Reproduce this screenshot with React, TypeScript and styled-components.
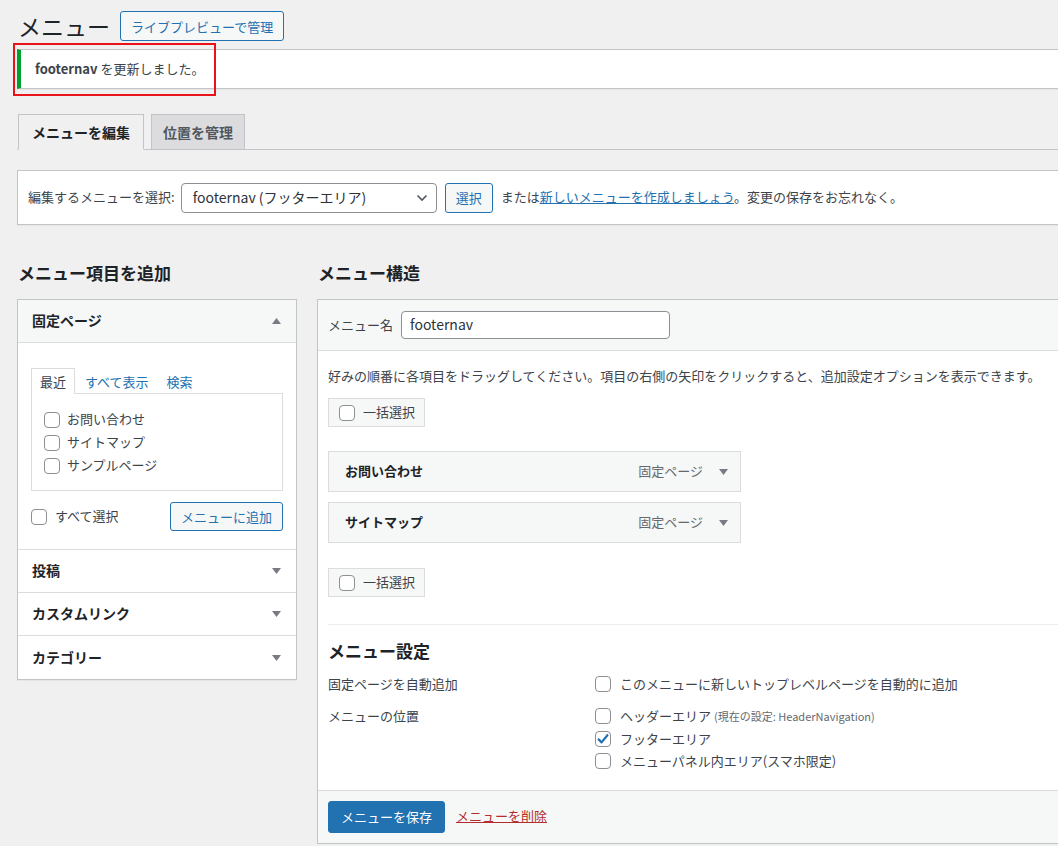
import React from "react";
import styled, { createGlobalStyle } from "styled-components";

const GlobalStyle = createGlobalStyle`
  html, body { margin: 0; padding: 0; background: #f0f0f1; overflow: hidden; }
  body {
    font-family: "Noto Sans CJK JP", "Noto Sans", sans-serif;
    font-size: 13px;
    line-height: 1.4;
    color: #3c434a;
  }
  * { box-sizing: border-box; }
`;

const Page = styled.div`
  width: 1072px;
  padding-left: 17px;
`;

const HeaderRow = styled.div`
  display: flex;
  align-items: center;
  gap: 10px;
  padding-top: 11px;
  height: 41px;
`;

const Title = styled.h1`
  margin: 0 0 0 1px;
  font-size: 23px;
  font-weight: 400;
  line-height: 30px;
  color: #1d2327;
`;

const OutlineButton = styled.button<{ $h?: number; $ml?: number }>`
  height: ${(p) => p.$h ?? 30}px;
  margin-left: ${(p) => p.$ml ?? 0}px;
  padding: 0 10px;
  border: 1px solid #2271b1;
  border-radius: 3px;
  background: #f6f7f7;
  color: #2271b1;
  font: inherit;
  font-size: 13px;
  line-height: 1;
  white-space: nowrap;
`;

const NoticeWrap = styled.div`
  position: relative;
  margin-top: 8px;
`;

const Notice = styled.div`
  height: 40px;
  display: flex;
  align-items: center;
  background: #fff;
  border: 1px solid #c3c4c7;
  border-left: 4px solid #00a32a;
  box-shadow: 0 1px 1px rgba(0, 0, 0, 0.04);
  padding-left: 14px;
  color: #3c434a;
  strong { font-weight: 600; }
`;

const Annotation = styled.div`
  position: absolute;
  left: -4px;
  top: -6px;
  width: 203px;
  height: 53px;
  border: 2px solid #e8141a;
  pointer-events: none;
`;

const TabBar = styled.div`
  margin-top: 25px;
  display: flex;
  gap: 7px;
  border-bottom: 1px solid #c3c4c7;
  padding-left: 1px;
`;

const Tab = styled.div<{ $active?: boolean }>`
  height: 36px;
  margin-bottom: -1px;
  padding: 0 11px;
  border: 1px solid #c3c4c7;
  border-bottom-color: ${(p) => (p.$active ? "#f0f0f1" : "#c3c4c7")};
  background: ${(p) => (p.$active ? "#f0f0f1" : "#dcdcde")};
  color: ${(p) => (p.$active ? "#1d2327" : "#50575e")};
  font-size: 14px;
  font-weight: 600;
  line-height: 34px;
  min-width: ${(p) => (p.$active ? "126px" : "auto")};
  text-align: center;
`;

const ManageBar = styled.div`
  margin-top: 20px;
  height: 55px;
  display: flex;
  align-items: center;
  padding: 0 10px;
  background: #fff;
  border: 1px solid #c3c4c7;
  box-shadow: 0 1px 1px rgba(0, 0, 0, 0.04);
`;

const FieldLabel = styled.span`
  color: #3c434a;
  margin-right: 6px;
  white-space: nowrap;
`;

const SelectBox = styled.div`
  width: 256px;
  height: 30px;
  display: flex;
  align-items: center;
  justify-content: space-between;
  padding: 0 8px 0 11px;
  border: 1px solid #8c8f94;
  border-radius: 4px;
  background: #fff;
  color: #2c3338;
  font-size: 14px;
`;

const HelpText = styled.span`
  margin-left: 8px;
  white-space: nowrap;
  a {
    color: #2271b1;
    text-decoration: underline;
  }
`;

const Columns = styled.div`
  margin-top: 36px;
  display: flex;
  gap: 20px;
  align-items: flex-start;
`;

const LeftCol = styled.div`
  width: 280px;
  flex: none;
`;

const RightCol = styled.div`
  flex: 1;
  min-width: 0;
`;

const ColumnTitle = styled.h2`
  margin: 0 0 14px 1px;
  font-size: 17px;
  font-weight: 700;
  line-height: 24px;
  color: #1d2327;
`;

const Panel = styled.div`
  background: #fff;
  border: 1px solid #c3c4c7;
  box-shadow: 0 1px 1px rgba(0, 0, 0, 0.04);
`;

const AccHeader = styled.div<{ $open?: boolean; $last?: boolean }>`
  height: ${(p) => (p.$last ? 43 : 43)}px;
  display: flex;
  align-items: center;
  justify-content: space-between;
  padding: 0 15px 0 14px;
  background: ${(p) => (p.$open ? "#f6f7f7" : "#fff")};
  border-bottom: ${(p) => (p.$last ? "none" : "1px solid #dcdcde")};
  font-size: 14px;
  font-weight: 700;
  color: #1d2327;
`;

const AccContent = styled.div`
  padding: 24px 13px 18px;
  border-bottom: 1px solid #dcdcde;
`;

const InnerTabs = styled.div`
  display: flex;
  align-items: flex-end;
  height: 26px;
`;

const InnerTab = styled.div<{ $active?: boolean }>`
  height: 26px;
  padding: 0 8px;
  line-height: 26px;
  color: ${(p) => (p.$active ? "#3c434a" : "#2271b1")};
  border: 1px solid ${(p) => (p.$active ? "#dcdcde" : "transparent")};
  border-bottom: none;
  background: ${(p) => (p.$active ? "#fff" : "transparent")};
  position: relative;
  margin-bottom: -1px;
  margin-right: ${(p) => (p.$active ? "1px" : "0")};
`;

const ListBox = styled.div`
  border: 1px solid #dcdcde;
  padding: 14px 12px 13px;
`;

const CheckRow = styled.label<{ $gap?: number; $h?: number }>`
  display: flex;
  align-items: center;
  gap: ${(p) => p.$gap ?? 7}px;
  height: ${(p) => p.$h ?? 23}px;
  color: #3c434a;
  white-space: nowrap;
`;

const CheckBoxBox = styled.span`
  width: 16px;
  height: 16px;
  flex: none;
  border: 1px solid #8c8f94;
  border-radius: 4px;
  background: #fff;
  display: inline-flex;
  align-items: center;
  justify-content: center;
`;

const ButtonRow = styled.div`
  margin-top: 11px;
  display: flex;
  align-items: center;
  justify-content: space-between;
`;

const MenuHeader = styled.div`
  height: 51px;
  display: flex;
  align-items: center;
  gap: 8px;
  padding: 0 10px;
  background: #f6f7f7;
  border-bottom: 1px solid #dcdcde;
`;

const NameInput = styled.div`
  width: 269px;
  height: 28px;
  display: flex;
  align-items: center;
  padding: 0 8px;
  border: 1px solid #8c8f94;
  border-radius: 4px;
  background: #fff;
  color: #2c3338;
  font-size: 14px;
`;

const MenuBody = styled.div`
  padding: 15px 10px 17px;
`;

const Instructions = styled.p`
  margin: 0;
  line-height: 20px;
  white-space: nowrap;
`;

const BulkBox = styled.div<{ $mt: number }>`
  margin-top: ${(p) => p.$mt}px;
  width: 97px;
  height: 29px;
  display: flex;
  align-items: center;
  gap: 8px;
  padding: 0 10px;
  background: #f6f7f7;
  border: 1px solid #dcdcde;
  white-space: nowrap;
`;

const ItemList = styled.div`
  margin-top: 24px;
  display: flex;
  flex-direction: column;
  gap: 10px;
  width: 413px;
`;

const MenuItem = styled.div`
  height: 41px;
  display: flex;
  align-items: center;
  padding: 0 12px 0 16px;
  background: #f6f7f7;
  border: 1px solid #dcdcde;
`;

const ItemTitle = styled.span`
  flex: 1;
  font-weight: 700;
  color: #1d2327;
`;

const ItemMeta = styled.span`
  color: #646970;
  margin-right: 16px;
`;

const SettingsDivider = styled.div`
  margin-top: 27px;
  border-top: 1px solid #ececec;
`;

const SettingsTitle = styled.h3`
  margin: 14px 0 0;
  font-size: 17px;
  font-weight: 700;
  line-height: 24px;
  color: #1d2327;
`;

const SettingRow = styled.div<{ $mt: number }>`
  margin-top: ${(p) => p.$mt}px;
  display: flex;
  align-items: flex-start;
`;

const SettingLabel = styled.div`
  width: 267px;
  flex: none;
  line-height: 22px;
  color: #3c434a;
`;

const SettingValues = styled.div`
  display: flex;
  flex-direction: column;
`;

const SmallNote = styled.span`
  font-size: 11px;
  color: #646970;
  margin-left: 3px;
`;

const Footer = styled.div`
  display: flex;
  align-items: center;
  gap: 11px;
  padding: 10px 10px;
  background: #f6f7f7;
  border-top: 1px solid #dcdcde;
`;

const PrimaryButton = styled.button`
  height: 32px;
  padding: 0 12px;
  border: 1px solid #2271b1;
  border-radius: 3px;
  background: #2271b1;
  color: #fff;
  font: inherit;
  font-size: 13px;
  line-height: 1;
`;

const DeleteLink = styled.a`
  color: #b32d2e;
  text-decoration: underline;
`;

const Arrow = ({ up, color = "#787c82" }: { up?: boolean; color?: string }) => (
  <svg width="9" height="6" viewBox="0 0 9 6" aria-hidden>
    {up ? <path d="M0 6 L4.5 0 L9 6 Z" fill={color} /> : <path d="M0 0 L9 0 L4.5 6 Z" fill={color} />}
  </svg>
);

const Check = ({ checked }: { checked?: boolean }) => (
  <CheckBoxBox>
    {checked && (
      <svg width="14" height="14" viewBox="0 0 14 14" aria-hidden>
        <path d="M2.6 7.4 L5.6 10.4 L11.4 3.2" fill="none" stroke="#2271b1" strokeWidth="2.2" strokeLinecap="round" strokeLinejoin="round" />
      </svg>
    )}
  </CheckBoxBox>
);

const Chevron = () => (
  <svg width="12" height="8" viewBox="0 0 12 8" aria-hidden>
    <path d="M1.5 1.5 L6 6 L10.5 1.5" fill="none" stroke="#50575e" strokeWidth="1.6" />
  </svg>
);

const pages = ["お問い合わせ", "サイトマップ", "サンプルページ"];
const menuItems = ["お問い合わせ", "サイトマップ"];

export default function App() {
  return (
    <>
      <GlobalStyle />
      <Page>
        <HeaderRow>
          <Title>メニュー</Title>
          <OutlineButton>ライブプレビューで管理</OutlineButton>
        </HeaderRow>

        <NoticeWrap>
          <Notice>
            <span>
              <strong>footernav</strong> を更新しました。
            </span>
          </Notice>
          <Annotation />
        </NoticeWrap>

        <TabBar>
          <Tab $active>メニューを編集</Tab>
          <Tab>位置を管理</Tab>
        </TabBar>

        <ManageBar>
          <FieldLabel>編集するメニューを選択:</FieldLabel>
          <SelectBox>
            <span>footernav (フッターエリア)</span>
            <Chevron />
          </SelectBox>
          <OutlineButton $ml={8}>選択</OutlineButton>
          <HelpText>
            または<a>新しいメニューを作成しましょう</a>。変更の保存をお忘れなく。
          </HelpText>
        </ManageBar>

        <Columns>
          <LeftCol>
            <ColumnTitle>メニュー項目を追加</ColumnTitle>
            <Panel>
              <AccHeader $open>
                <span>固定ページ</span>
                <Arrow up />
              </AccHeader>
              <AccContent>
                <InnerTabs>
                  <InnerTab $active>最近</InnerTab>
                  <InnerTab>すべて表示</InnerTab>
                  <InnerTab>検索</InnerTab>
                </InnerTabs>
                <ListBox>
                  {pages.map((p) => (
                    <CheckRow key={p}>
                      <Check />
                      {p}
                    </CheckRow>
                  ))}
                </ListBox>
                <ButtonRow>
                  <CheckRow $gap={8}>
                    <Check />
                    すべて選択
                  </CheckRow>
                  <OutlineButton $h={29}>メニューに追加</OutlineButton>
                </ButtonRow>
              </AccContent>
              <AccHeader>
                <span>投稿</span>
                <Arrow />
              </AccHeader>
              <AccHeader>
                <span>カスタムリンク</span>
                <Arrow />
              </AccHeader>
              <AccHeader $last>
                <span>カテゴリー</span>
                <Arrow />
              </AccHeader>
            </Panel>
          </LeftCol>

          <RightCol>
            <ColumnTitle>メニュー構造</ColumnTitle>
            <Panel>
              <MenuHeader>
                <span>メニュー名</span>
                <NameInput>footernav</NameInput>
              </MenuHeader>
              <MenuBody>
                <Instructions>
                  好みの順番に各項目をドラッグしてください。項目の右側の矢印をクリックすると、追加設定オプションを表示できます。
                </Instructions>
                <BulkBox $mt={12}>
                  <Check />
                  一括選択
                </BulkBox>
                <ItemList>
                  {menuItems.map((m) => (
                    <MenuItem key={m}>
                      <ItemTitle>{m}</ItemTitle>
                      <ItemMeta>固定ページ</ItemMeta>
                      <Arrow />
                    </MenuItem>
                  ))}
                </ItemList>
                <BulkBox $mt={25}>
                  <Check />
                  一括選択
                </BulkBox>
                <SettingsDivider />
                <SettingsTitle>メニュー設定</SettingsTitle>
                <SettingRow $mt={10}>
                  <SettingLabel>固定ページを自動追加</SettingLabel>
                  <SettingValues>
                    <CheckRow $gap={9} $h={22}>
                      <Check />
                      このメニューに新しいトップレベルページを自動的に追加
                    </CheckRow>
                  </SettingValues>
                </SettingRow>
                <SettingRow $mt={10}>
                  <SettingLabel>メニューの位置</SettingLabel>
                  <SettingValues>
                    <CheckRow $gap={9} $h={22.5}>
                      <Check />
                      <span>
                        ヘッダーエリア<SmallNote>(現在の設定: HeaderNavigation)</SmallNote>
                      </span>
                    </CheckRow>
                    <CheckRow $gap={9} $h={22.5}>
                      <Check checked />
                      フッターエリア
                    </CheckRow>
                    <CheckRow $gap={9} $h={22.5}>
                      <Check />
                      メニューパネル内エリア(スマホ限定)
                    </CheckRow>
                  </SettingValues>
                </SettingRow>
              </MenuBody>
              <Footer>
                <PrimaryButton>メニューを保存</PrimaryButton>
                <DeleteLink>メニューを削除</DeleteLink>
              </Footer>
            </Panel>
          </RightCol>
        </Columns>
      </Page>
    </>
  );
}
